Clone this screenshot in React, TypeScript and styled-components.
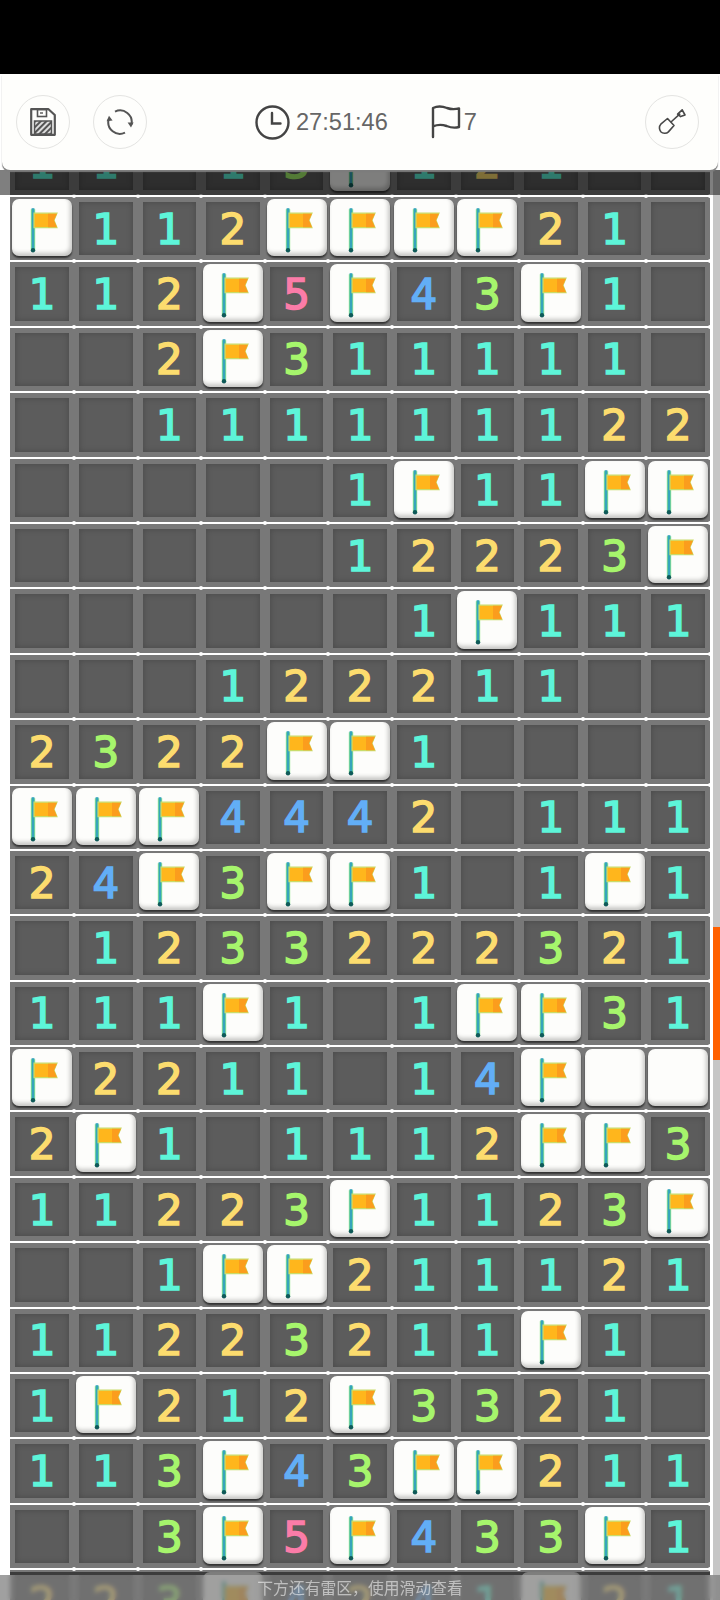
import { createGlobalStyle, styled } from 'styled-components'

const rows = [
  '11_13F121__',
  'F112FFFF21_',
  '112F5F43F1_',
  '__2F311111_',
  '__111111122',
  '_____1F11FF',
  '_____12223F',
  '______1F111',
  '___1222 11__'.replace(' ', ''),
  '2322FF1____',
  'FFF4442_111',
  '24F3FF1_1F1',
  '_1233222321',
  '111F1_1FF31',
  'F2211_14FWW',
  '2F1_1112FF3',
  '11223F1123F',
  '__1FF211121',
  '1122321 1F1_'.replace(' ', ''),
  '1F212F3321_',
  '113F43FF211',
  '__3F5F433F1',
  '223F4241F21',
]

const digitColors: Record<string, string> = {
  '1': '#5df5d9',
  '2': '#fcdc6e',
  '3': '#a6f56c',
  '4': '#62aef6',
  '5': '#fb7ca8',
}

const GlobalStyle = createGlobalStyle`
  html, body {
    margin: 0;
    padding: 0;
    background: #fff;
  }
`

const Page = styled.div`
  position: relative;
  width: 720px;
  height: 1600px;
  overflow: hidden;
  background: #fff;
  font-family: 'Liberation Sans', 'Noto Sans CJK SC', sans-serif;
`

const StatusBar = styled.div`
  position: relative;
  z-index: 3;
  height: 74px;
  background: #000;
`

const Header = styled.header`
  position: relative;
  z-index: 3;
  box-sizing: border-box;
  height: 96px;
  margin: 0 2px;
  padding: 0 19px 0 14px;
  display: flex;
  align-items: center;
  background: #fefefc;
  border-radius: 0 0 8px 8px;
  box-shadow: 0 2px 1px #7d7d7d;
`

const ButtonGroup = styled.div`
  display: flex;
  gap: 23px;
`

const RoundButton = styled.div<{ $right?: boolean }>`
  box-sizing: border-box;
  width: 54px;
  height: 54px;
  display: flex;
  align-items: center;
  justify-content: center;
  border: 1px solid #e4e4e2;
  border-radius: 50%;
  margin-left: ${(p) => (p.$right ? 'auto' : '0')};
`

const Stats = styled.div`
  display: flex;
  align-items: center;
  margin-left: 108px;
`

const StatText = styled.span<{ $gap: number }>`
  font-size: 23.6px;
  line-height: 34px;
  color: #666;
  margin-left: ${(p) => p.$gap}px;
`

const FlagStat = styled.div`
  display: flex;
  align-items: center;
  margin-left: 43px;
`

const Board = styled.main`
  margin-top: -38.4px;
  padding: 0 10px 0 10.4px;
  display: grid;
  grid-template-columns: repeat(11, 63.6px);
  grid-auto-rows: 65.4px;
`

const Cell = styled.div<{ $tile: boolean }>`
  position: relative;
  box-sizing: border-box;
  padding: ${(p) => (p.$tile ? '2px 1.8px 4px 1.8px' : '5px')};
  background: #787878;
  border-bottom: 2px solid #fff;

  &::after {
    content: '';
    position: absolute;
    right: -2px;
    bottom: -3px;
    width: 4px;
    height: 4px;
    border-radius: 50%;
    background: #fff;
    z-index: 1;
  }
`

const Number = styled.div<{ $color?: string }>`
  box-sizing: border-box;
  height: 100%;
  padding-top: 2px;
  display: flex;
  align-items: center;
  justify-content: center;
  background: #5c5c5c;
  box-shadow: inset 0 0 6px rgba(0, 0, 0, 0.22);
  font-family: 'DejaVu Sans', sans-serif;
  font-size: 42px;
  line-height: 1;
  color: ${(p) => p.$color ?? 'transparent'};
  -webkit-text-stroke: 1.6px ${(p) => p.$color ?? 'transparent'};
`

const Tile = styled.div`
  height: 100%;
  border-radius: 7px;
  background: #fdfdfb;
  box-shadow: inset -2px -3px 4px rgba(0, 0, 0, 0.22), 0 2px 2px rgba(0, 0, 0, 0.6);
`

const TopShade = styled.div`
  position: absolute;
  z-index: 2;
  top: 170px;
  left: 0;
  right: 0;
  height: 25px;
  background: rgba(0, 0, 0, 0.5);
`

const Track = styled.div`
  position: absolute;
  z-index: 1;
  top: 170px;
  right: 0;
  bottom: 0;
  width: 7px;
  background: #c6c6c6;
`

const Thumb = styled.div`
  position: absolute;
  top: 757px;
  left: 0;
  right: 0;
  height: 133px;
  background: #ff6000;
`

const Toast = styled.div`
  position: absolute;
  z-index: 2;
  left: 0;
  right: 0;
  bottom: 0;
  height: 25px;
  display: flex;
  align-items: center;
  justify-content: center;
  background: rgba(121, 121, 121, 0.71);
  backdrop-filter: blur(2px);
  font-size: 15.8px;
  color: rgba(255, 255, 255, 0.55);

  &::before {
    content: '';
    position: absolute;
    left: 10px;
    right: 10px;
    top: -3px;
    height: 3px;
    background: rgba(0, 0, 0, 0.5);
  }
`

const Flag = () => (
  <svg width="100%" height="100%" viewBox="0 0 60 57">
    <path d="M21 10V51" stroke="#93e98c" strokeWidth="4.4" />
    <path d="M21 9V51" stroke="#35a5bb" strokeWidth="2.8" />
    <circle cx="21" cy="51" r="2.2" fill="#0f5a58" />
    <path d="M22 14H45L42 21L45 28.5H22Z" fill="#ffb61c" stroke="#c9dc6a" strokeWidth="1.2" />
    <path d="M36 14.5H45L42 21L45 28H36Z" fill="#fb9d1d" />
  </svg>
)

const FloppyIcon = () => (
  <svg width="26" height="28" viewBox="0 0 26 28">
    <defs>
      <pattern id="hatch" width="4" height="4" patternUnits="userSpaceOnUse" patternTransform="rotate(45)">
        <rect width="4" height="4" fill="#ddd" />
        <rect width="2" height="4" fill="#555" />
      </pattern>
    </defs>
    <path d="M1.2 1.2H18.5L24.8 7V26.8H1.2Z" fill="none" stroke="#555" strokeWidth="2.2" strokeLinejoin="round" />
    <rect x="7.5" y="1.5" width="9" height="7" fill="none" stroke="#555" strokeWidth="1.6" />
    <path d="M10 5H13" stroke="#555" strokeWidth="1.4" />
    <rect x="4.5" y="13" width="17" height="13" fill="url(#hatch)" stroke="#555" strokeWidth="1.5" />
  </svg>
)

const RefreshIcon = () => (
  <svg width="28" height="28" viewBox="0 0 28 28" fill="none" stroke="#555" strokeWidth="2">
    <path d="M9 3.6A11.6 11.6 0 0 1 25.4 16.6" />
    <path d="M21.6 14.6L25 19.6L27.6 14.6" fill="#555" stroke="none" />
    <path d="M19 24.6A11.6 11.6 0 0 1 2.6 11.5" />
    <path d="M0.6 13.2L3 7.8L6.6 12.6" fill="#555" stroke="none" />
  </svg>
)

const ShovelIcon = () => (
  <svg width="28" height="26" viewBox="0 0 28 26" fill="none" stroke="#484848" strokeWidth="1.6" strokeLinejoin="round">
    <path d="M9.5 9.5L2.8 15.2C0.6 17.4 1.4 21 2.8 22.8C4.6 24.6 8.4 25 10.4 22.9L16 16.5Z" />
    <path d="M13 13L22.2 4.6" />
    <path d="M19.6 5.2L24.2 0.8L27 6L22.6 7.6Z" />
  </svg>
)

const ClockIcon = () => (
  <svg width="35" height="35" viewBox="0 0 35 35" fill="none" stroke="#444" strokeWidth="2.4" strokeLinecap="round">
    <circle cx="17.5" cy="17.5" r="16" />
    <path d="M17 8V18.5H25.5" />
  </svg>
)

const FlagIcon = () => (
  <svg width="30" height="34" viewBox="0 0 30 34" fill="none" stroke="#444" strokeWidth="2.4" strokeLinecap="round" strokeLinejoin="round">
    <path d="M2 32V3C7 0.5 12 1.4 16 3C20 4.4 24 4.4 28 3.4V22C23.6 23.2 19.6 22.6 15.6 21C11 19.4 6.6 19.4 2 21.4" />
  </svg>
)

export default function App() {
  return (
    <Page>
      <GlobalStyle />
      <StatusBar />
      <Header>
        <ButtonGroup>
          <RoundButton>
            <FloppyIcon />
          </RoundButton>
          <RoundButton>
            <RefreshIcon />
          </RoundButton>
        </ButtonGroup>
        <Stats>
          <ClockIcon />
          <StatText $gap={6}>27:51:46</StatText>
          <FlagStat>
            <FlagIcon />
            <StatText $gap={3}>7</StatText>
          </FlagStat>
        </Stats>
        <RoundButton $right>
          <ShovelIcon />
        </RoundButton>
      </Header>
      <Board>
        {rows.flatMap((row, r) =>
          row.split('').map((ch, c) => {
            const tile = ch === 'F' || ch === 'W'
            return (
              <Cell key={`${r}-${c}`} $tile={tile}>
                {tile ? (
                  <Tile>{ch === 'F' && <Flag />}</Tile>
                ) : (
                  <Number $color={digitColors[ch]}>{ch === '_' ? '' : ch}</Number>
                )}
              </Cell>
            )
          }),
        )}
      </Board>
      <Track>
        <Thumb />
      </Track>
      <TopShade />
      <Toast>下方还有雷区，使用滑动查看</Toast>
    </Page>
  )
}
